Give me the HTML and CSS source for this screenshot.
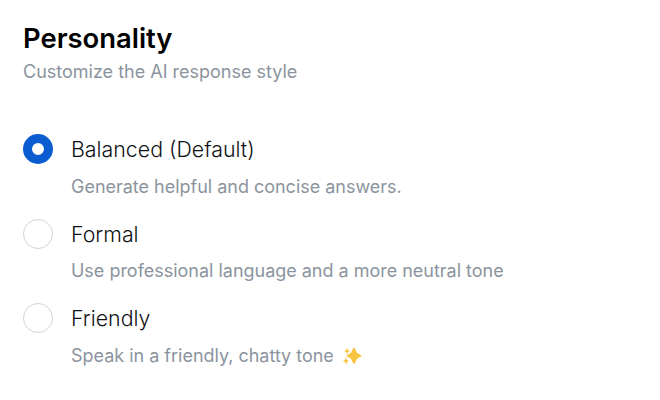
FILE: index.html
```
<!DOCTYPE html>
<html lang="en">
<head>
    <meta charset="UTF-8">
    <meta name="viewport" content="width=device-width, initial-scale=1.0">
    <title>Personality</title>
    <link rel="stylesheet" href="styles.css">
</head>
<body>
    <form class="settings">
        <h1>Personality</h1>
        <p class="subtitle">Customize the AI response style</p>

        <div class="options">
            <label class="option">
                <input type="radio" name="personality" value="balanced" checked>
                <span class="option-text">
                    <span class="option-title">Balanced (Default)</span>
                    <span class="option-description">Generate helpful and concise answers.</span>
                </span>
            </label>
            <label class="option">
                <input type="radio" name="personality" value="formal">
                <span class="option-text">
                    <span class="option-title">Formal</span>
                    <span class="option-description">Use professional language and a more neutral tone</span>
                </span>
            </label>
            <label class="option">
                <input type="radio" name="personality" value="friendly">
                <span class="option-text">
                    <span class="option-title">Friendly</span>
                    <span class="option-description">Speak in a friendly, chatty tone
                        <svg class="sparkles" viewBox="0 0 20 20" aria-hidden="true">
                            <path d="M12 1.6Q12.6 1.6 12.9 2.6L15 6.8L18.8 9Q19.6 9.4 19.6 9.8Q19.6 10.2 18.8 10.6L15 12.8L12.9 17Q12.6 18 12 18Q11.4 18 11.1 17L9 12.8L5.2 10.6Q4.4 10.2 4.4 9.8Q4.4 9.4 5.2 9L9 6.8L11.1 2.6Q11.4 1.6 12 1.6Z"/>
                            <path d="M5 2L5.9 4.1L8 5L5.9 5.9L5 8L4.1 5.9L2 5L4.1 4.1Z"/>
                            <path d="M4 11.6L5 14L7.2 15L5 16L4 18.4L3 16L.8 15L3 14Z"/>
                        </svg>
                    </span>
                </span>
            </label>
        </div>
    </form>
</body>
</html>
```
FILE: styles.css
```
body {
    margin: 0;
    background: #ffffff;
    color: #101114;
    font-family: Inter, "Liberation Sans", sans-serif;
}

.settings {
    padding: 22px 23px;
}

h1 {
    margin: 0;
    color: #000000;
    font-size: 27.4px;
    font-weight: 600;
    line-height: 33px;
}

.subtitle {
    margin: 5px 0 0;
    color: #8b949e;
    font-size: 18px;
    line-height: 24px;
}

/* Radio list */
.options {
    display: flex;
    flex-direction: column;
    gap: 19.75px;
    margin-top: 50px;
}

.option {
    display: flex;
    align-items: flex-start;
    gap: 18px;
    cursor: pointer;
}

.option input {
    appearance: none;
    flex: none;
    box-sizing: border-box;
    width: 30px;
    height: 30px;
    margin: 0;
    border: 1px solid #d0d5db;
    border-radius: 50%;
    background: #ffffff;
    cursor: pointer;
}

.option input:checked {
    border: 9px solid #0b5cd0;
}

.option-text {
    display: flex;
    flex-direction: column;
    gap: 10.75px;
}

.option-title {
    font-size: 21.35px;
    font-weight: 300;
    line-height: 30px;
}

.option-description {
    color: #8b949e;
    font-size: 17.98px;
    line-height: 24px;
}

.sparkles {
    width: 20px;
    height: 20px;
    margin-left: 3px;
    vertical-align: -4px;
    fill: #f9c440;
}
```
